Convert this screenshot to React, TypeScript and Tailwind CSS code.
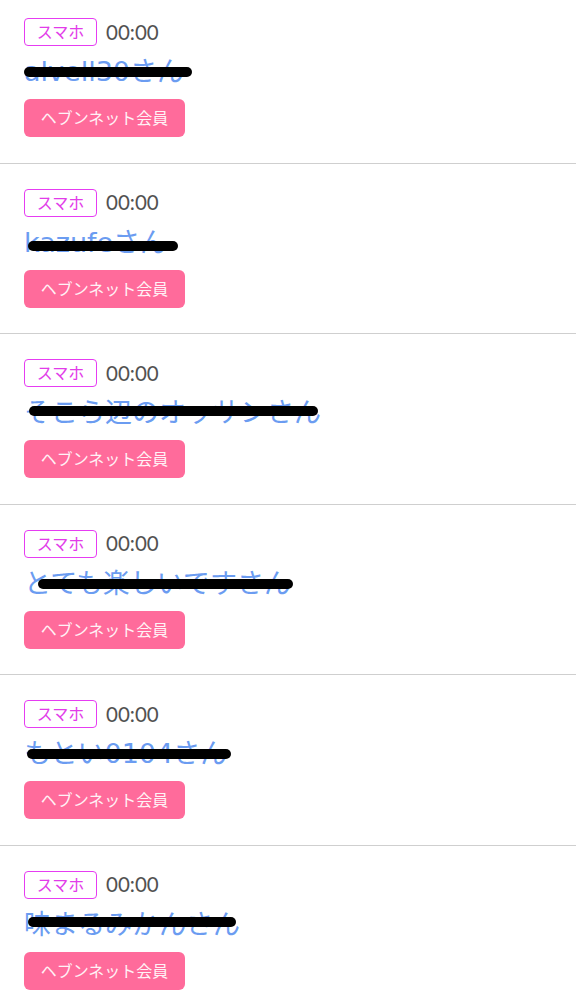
import React from "react";

interface Entry {
  name: string;
  barLeft: number;
  barWidth: number;
  barShift: number;
}

const entries: Entry[] = [
  { name: "alvell30さん", barLeft: 0, barWidth: 168, barShift: 0 },
  { name: "kazufeさん", barLeft: 4, barWidth: 150, barShift: 3 },
  { name: "そこら辺のオッサンさん", barLeft: 5, barWidth: 289, barShift: -2 },
  { name: "とても楽しいですさん", barLeft: 14, barWidth: 255, barShift: 0 },
  { name: "もとい0104さん", barLeft: 3, barWidth: 204, barShift: 0 },
  { name: "味まるみかんさん", barLeft: 4, barWidth: 208, barShift: -3 },
];

function Row({ entry }: { entry: Entry }) {
  return (
    <li className="border-b border-[#cfcfcf] px-6 pt-[25px] pb-[25.5px]">
      {/* device + time */}
      <div className="flex items-center h-[28px]">
        <span className="h-[28px] w-[73px] flex items-center justify-center border border-[#e63cf2] rounded-[4px] text-[#e23ce9] text-[16px] leading-none">
          スマホ
        </span>
        <span className="ml-[9px] text-[20.5px] text-[#525252] leading-none">00:00</span>
      </div>

      {/* name (redacted) */}
      <div className="relative mt-[10px] mb-[11px] h-[32px] flex items-center">
        <span
          className="text-[27px] leading-[32px] text-[#6b9cf1] whitespace-nowrap"
          style={{ fontFamily: '"DejaVu Sans", "Noto Sans CJK JP", sans-serif' }}
        >
          {entry.name}
        </span>
        <span
          className="absolute h-[10px] bg-black rounded-full"
          style={{
            left: entry.barLeft,
            width: entry.barWidth,
            top: 11 + entry.barShift,
          }}
        />
      </div>

      <button className="h-[38px] w-[161px] rounded-[6px] bg-[#ff6b9b] text-[#fff2f6] text-[16px] leading-none flex items-center justify-center">
        ヘブンネット会員
      </button>
    </li>
  );
}

export default function App() {
  return (
    <div
      className="min-h-screen bg-white overflow-hidden"
      style={{ fontFamily: '"Lato", "Noto Sans CJK JP", sans-serif' }}
    >
      <ul className="-mt-[7px]">
        {entries.map((e, i) => (
          <Row key={i} entry={e} />
        ))}
      </ul>
    </div>
  );
}
